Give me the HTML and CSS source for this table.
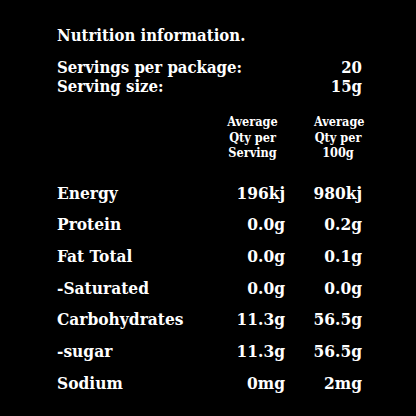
FILE: index.html
```html
<!DOCTYPE html>
<html lang="en">
<head>
    <meta charset="UTF-8">
    <title>Nutrition information</title>
    <link rel="stylesheet" href="styles.css">
</head>
<body>
    <div class="panel">
        <h1>Nutrition information.</h1>
        <div class="servings">
            <div class="line"><span>Servings per package:</span><span>20</span></div>
            <div class="line"><span>Serving size:</span><span>15g</span></div>
        </div>
        <div class="grid">
            <div class="head"></div>
            <div class="head">Average<br>Qty per<br>Serving</div>
            <div class="head last">Average<br>Qty per<br>100g</div>

            <div class="name">Energy</div><div class="val">196kj</div><div class="val">980kj</div>
            <div class="name">Protein</div><div class="val">0.0g</div><div class="val">0.2g</div>
            <div class="name">Fat Total</div><div class="val">0.0g</div><div class="val">0.1g</div>
            <div class="name">-Saturated</div><div class="val">0.0g</div><div class="val">0.0g</div>
            <div class="name">Carbohydrates</div><div class="val">11.3g</div><div class="val">56.5g</div>
            <div class="name">-sugar</div><div class="val">11.3g</div><div class="val">56.5g</div>
            <div class="name">Sodium</div><div class="val">0mg</div><div class="val">2mg</div>
        </div>
    </div>
</body>
</html>
```

FILE: styles.css
```css
body {
    margin: 0;
    background-color: #000;
    color: #fff;
    font-family: "DejaVu Serif Condensed", "DejaVu Serif", serif;
    font-weight: bold;
}
.panel {
    width: 305px;
    padding: 25px 0 0 57px;
}
h1 {
    font-size: 16.6px;
    line-height: 20px;
    margin: 0 0 13px;
}
.servings {
    font-size: 16.6px;
    line-height: 18.5px;
}
.line {
    display: flex;
    justify-content: space-between;
}
.grid {
    display: grid;
    grid-template-columns: 1fr 77px 77px;
    margin-top: 19px;
}
.head {
    font-size: 12.6px;
    line-height: 15.5px;
    text-align: center;
    padding-left: 12px;
    margin-bottom: 17px;
}
.head.last {
    padding-left: 29px;
}
.name, .val {
    font-size: 17.2px;
    line-height: 31.7px;
}
.val {
    text-align: right;
}
```
